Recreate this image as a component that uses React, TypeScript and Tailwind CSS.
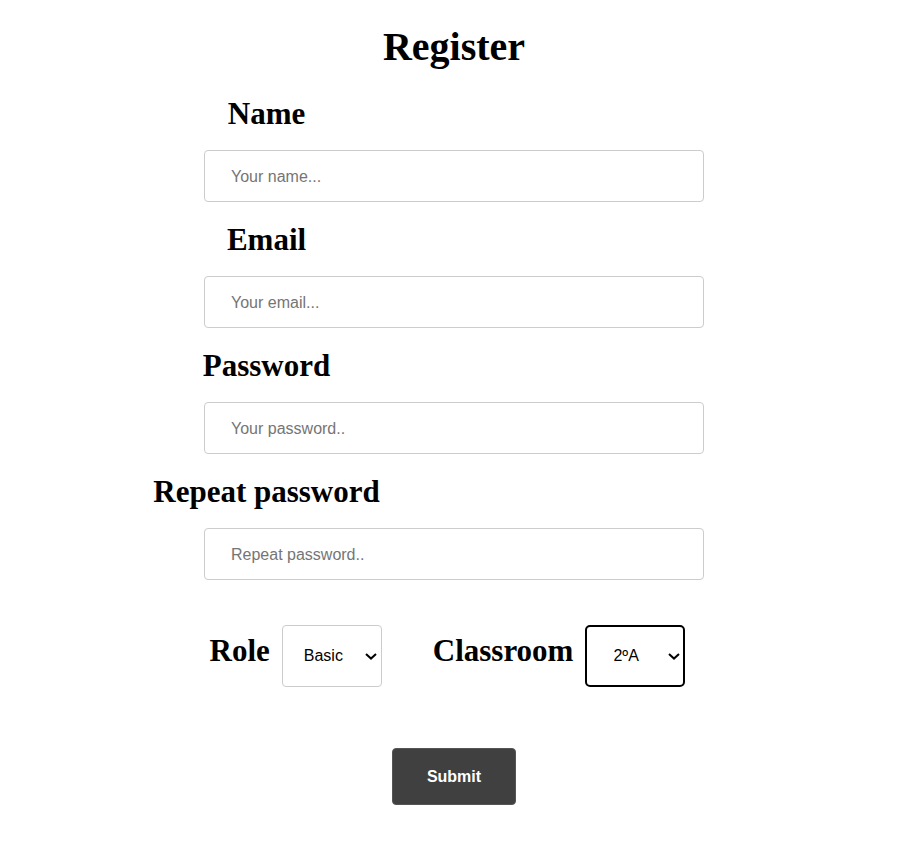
import React from 'react';

const serif = "font-['Liberation_Serif','Times_New_Roman',serif] font-bold text-black";
const sans = "font-['Liberation_Sans',Arial,sans-serif]";

function Field({ label, placeholder, type = 'text', first = false }: { label: string; placeholder: string; type?: string; first?: boolean }) {
  return (
    <div className={`w-[500px] flex flex-col ${first ? 'mt-[25px]' : 'mt-[19px]'}`}>
      <div className="w-[125px] flex justify-center">
        <label className={`${serif} text-[31px] leading-[37px] whitespace-nowrap`}>{label}</label>
      </div>
      <input
        type={type}
        placeholder={placeholder}
        className={`${sans} mt-[18px] w-[500px] h-[52px] border border-[#cccccc] rounded-[4px] px-[26px] pt-[2px] text-[16px] text-black placeholder:text-[#757575] outline-none bg-white`}
      />
    </div>
  );
}

function Chevron() {
  return (
    <svg
      className="absolute right-[5px] top-[28px] pointer-events-none"
      width="12"
      height="7"
      viewBox="0 0 12 7"
      fill="none"
    >
      <path d="M1 1L6 5.6L11 1" stroke="#000" strokeWidth="2" />
    </svg>
  );
}

export default function App() {
  return (
    <div className="w-full min-h-screen bg-white flex flex-col items-center pl-[3px]">
      <h1 className={`${serif} text-[40px] leading-[46px] pt-[24px]`}>Register</h1>

      <Field label="Name" placeholder="Your name..." first />
      <Field label="Email" placeholder="Your email..." type="email" />
      <Field label="Password" placeholder="Your password.." type="password" />
      <Field label="Repeat password" placeholder="Repeat password.." type="password" />

      <div className="mt-[45px] mr-[13px] flex items-baseline">
        <label className={`${serif} text-[31px] leading-[37px]`}>Role</label>
        <div className="relative ml-[12px] flex">
          <select
            defaultValue="basic"
            className={`${sans} appearance-none w-[100px] h-[62px] border border-[#cccccc] rounded-[4px] pl-[21px] pr-[20px] text-[16px] text-black bg-white`}
          >
            <option value="basic">Basic</option>
            <option value="admin">Admin</option>
          </select>
          <Chevron />
        </div>
        <label className={`${serif} text-[31px] leading-[37px] ml-[51px]`}>Classroom</label>
        <div className="relative ml-[12px] flex">
          <select
            defaultValue="2A"
            className={`${sans} appearance-none w-[100px] h-[62px] border-2 border-black rounded-[5px] pl-[26px] pr-[20px] text-[16px] text-black bg-white`}
          >
            <option value="2A">2ºA</option>
            <option value="2B">2ºB</option>
          </select>
          <Chevron />
        </div>
      </div>

      <button
        type="submit"
        className={`${sans} mt-[61px] w-[124px] h-[57px] bg-[#404040] text-white font-bold text-[16px] rounded-[4px] border border-[#555555]`}
      >
        Submit
      </button>
    </div>
  );
}
